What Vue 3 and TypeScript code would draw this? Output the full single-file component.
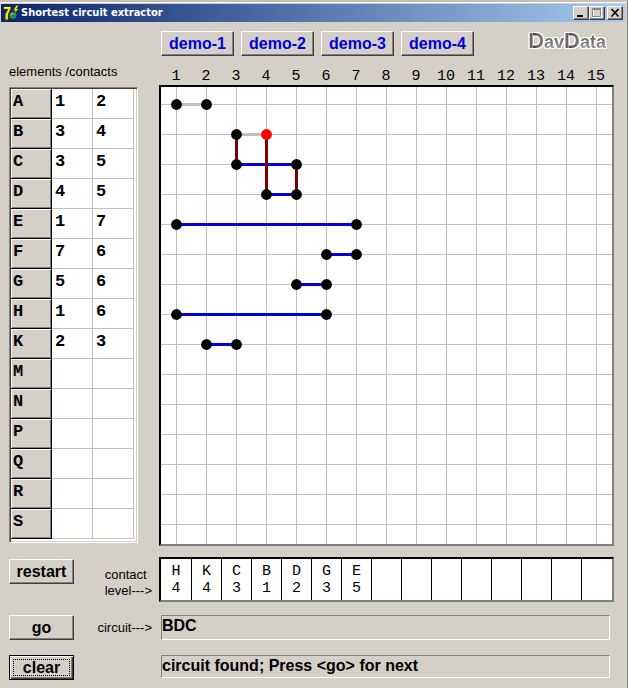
<script setup lang="ts">
interface Element {
  name: string
  from?: number
  to?: number
}

interface Level {
  name: string
  level: number
}

const elements: Element[] = [
  { name: 'A', from: 1, to: 2 },
  { name: 'B', from: 3, to: 4 },
  { name: 'C', from: 3, to: 5 },
  { name: 'D', from: 4, to: 5 },
  { name: 'E', from: 1, to: 7 },
  { name: 'F', from: 7, to: 6 },
  { name: 'G', from: 5, to: 6 },
  { name: 'H', from: 1, to: 6 },
  { name: 'K', from: 2, to: 3 },
  { name: 'M' },
  { name: 'N' },
  { name: 'P' },
  { name: 'Q' },
  { name: 'R' },
  { name: 'S' },
]

const demos: string[] = ['demo-1', 'demo-2', 'demo-3', 'demo-4']

const levels: (Level | null)[] = [
  { name: 'H', level: 4 },
  { name: 'K', level: 4 },
  { name: 'C', level: 3 },
  { name: 'B', level: 1 },
  { name: 'D', level: 2 },
  { name: 'G', level: 3 },
  { name: 'E', level: 5 },
  ...Array<null>(8).fill(null),
]

// Centre of a contact column / element row on the board
const cx = (contact: number): number => (contact - 1) * 30 + 15.5
const cy = (row: number): number => row * 30 + 17.5

const wired = elements
  .map((e, row) => ({ ...e, row }))
  .filter((e): e is { name: string; from: number; to: number; row: number } => e.from !== undefined)

const idle = new Set<string>(['A', 'B'])

// Vertical joins: contact, first row, last row
const joins: [number, number, number][] = [
  [3, 1, 2],
  [4, 1, 3],
  [5, 2, 3],
]

const isActive = (row: number, contact: number): boolean => row === 1 && contact === 4
</script>

<template>
  <div class="window">
    <header class="titlebar">
      <svg class="app-icon" width="17" height="16" viewBox="0 0 17 16" aria-hidden="true">
        <path d="M1.500 1.500H9V4L6.500 9V15H3V9L5.500 4.500H1.500Z" fill="#f4dc28" stroke="#3a3400" stroke-width="1" />
        <path d="M2.500 2.500H8" stroke="#fffbb0" />
        <circle cx="11" cy="10.500" r="4" fill="#2e8b57" stroke="#10402c" />
        <path d="M8.500 10L10.500 8.500L12.500 9.500" stroke="#a5e0c0" fill="none" />
        <path d="M14 0.500L11.500 5.500H13.500L11.500 9.500L16.500 4H14.500L16.500 0.500Z" fill="#f8f020" stroke="#3c4a10" stroke-width="0.500" />
      </svg>
      <h1>Shortest circuit extractor</h1>
      <div class="caption-buttons">
        <button type="button" aria-label="Minimize">
          <svg width="12" height="10" viewBox="0 0 12 10"><path d="M2 7H8V9H2Z" fill="#000" /></svg>
        </button>
        <button type="button" aria-label="Maximize" disabled>
          <svg width="12" height="10" viewBox="0 0 12 10">
            <path d="M2.500 1V9.500H10.500V1" fill="none" stroke="#fff" />
            <path d="M1.500 0.500H9.500V8.500H1.500ZM1.500 1.500H9.500" fill="none" stroke="#868686" />
          </svg>
        </button>
        <button type="button" class="close" aria-label="Close">
          <svg width="12" height="10" viewBox="0 0 12 10"><path d="M2.500 1L9.500 8.500M9.500 1L2.500 8.500" stroke="#000" stroke-width="1.700" /></svg>
        </button>
      </div>
    </header>

    <main>
      <div class="upper">
        <div class="table-title">elements /contacts</div>
        <div class="board-head">
          <div class="toolbar">
            <button v-for="demo in demos" :key="demo" type="button" class="btn demo">{{ demo }}</button>
            <div class="logo"><span class="cap">D</span><span class="low">av</span><span class="cap">D</span><span class="low">ata</span></div>
          </div>
          <div class="numbers">
            <span v-for="n in 15" :key="n">{{ n }}</span>
          </div>
        </div>

        <div class="sunken">
          <table>
            <tbody>
              <tr v-for="e in elements" :key="e.name">
                <th scope="row">{{ e.name }}</th>
                <td>{{ e.from }}</td>
                <td>{{ e.to }}</td>
              </tr>
            </tbody>
          </table>
        </div>

        <div class="panel board">
          <svg width="100%" height="457" role="img" aria-label="Circuit board">
            <g class="grid">
              <line v-for="n in 15" :key="'v' + n" :x1="cx(n)" :x2="cx(n)" y1="0" y2="457" />
              <line v-for="n in 15" :key="'h' + n" x1="0" x2="100%" :y1="cy(n - 1)" :y2="cy(n - 1)" />
            </g>
            <line
              v-for="e in wired"
              :key="e.name"
              :class="['wire', { idle: idle.has(e.name) }]"
              :x1="cx(e.from)"
              :x2="cx(e.to)"
              :y1="cy(e.row)"
              :y2="cy(e.row)"
            />
            <line
              v-for="[c, a, b] in joins"
              :key="'j' + c"
              class="wire join"
              :x1="cx(c)"
              :x2="cx(c)"
              :y1="cy(a)"
              :y2="cy(b)"
            />
            <template v-for="e in wired" :key="'p' + e.name">
              <circle
                v-for="c in [e.from, e.to]"
                :key="c"
                :class="{ active: isActive(e.row, c) }"
                :cx="cx(c)"
                :cy="cy(e.row)"
                r="5.4"
              />
            </template>
          </svg>
        </div>
      </div>

      <div class="lower">
        <button type="button" class="btn side">restart</button>
        <div class="caption two"><span>contact<br />level---&gt;</span></div>
        <ol class="panel levels">
          <li v-for="(l, i) in levels" :key="i">
            <template v-if="l"><span>{{ l.name }}</span><span>{{ l.level }}</span></template>
          </li>
        </ol>

        <button type="button" class="btn side">go</button>
        <label class="caption" for="circuit">circuit---&gt;</label>
        <output id="circuit" class="field">BDC</output>

        <button type="button" class="btn side default"><span>clear</span></button>
        <output class="field status">circuit found; Press &lt;go&gt; for next</output>
      </div>
    </main>
  </div>
</template>

<style>
body {
  background: #d4d0c8;
}
</style>

<style scoped>
.window {
  box-sizing: border-box;
  min-height: 100vh;
  padding: 1px 2px 0 1px;
  border-top: 2px solid #c4c0b8;
  border-right: 1px solid #808080;
  box-shadow: inset 0 1px #fff;
  background: #d4d0c8;
  color: #000;
  font-family: "Liberation Sans", Arial, sans-serif;
  font-size: 13px;
}

.titlebar {
  display: flex;
  align-items: center;
  height: 18px;
  margin-top: 1px;
  padding: 0 2px 0 1px;
  background: linear-gradient(to right, #0a246a, #a6caf0);
}

.titlebar h1 {
  flex: 1;
  margin: 0 0 0 2px;
  color: #fff;
  font: bold 11px/18px "DejaVu Sans Condensed", "DejaVu Sans", Tahoma, sans-serif;
}

.caption-buttons {
  display: flex;
}

.caption-buttons button {
  display: flex;
  box-sizing: border-box;
  width: 16px;
  height: 14px;
  padding: 1px;
  border: 1px solid;
  border-color: #fff #404040 #404040 #fff;
  background: #d4d0c8;
  box-shadow: inset -1px -1px #808080;
}

.caption-buttons .close {
  margin-left: 2px;
}

main {
  padding: 9px 11px 8px 8px;
}

.upper {
  display: grid;
  grid-template-columns: 129px 1fr;
  column-gap: 21px;
}

.table-title {
  align-self: end;
  padding-bottom: 5px;
  line-height: 16px;
}

.toolbar {
  display: flex;
  gap: 7px;
  padding: 0 8px 0 2px;
}

.btn {
  box-sizing: border-box;
  height: 25px;
  padding: 0;
  border: 1px solid;
  border-color: #fff #404040 #404040 #fff;
  background: #d4d0c8;
  box-shadow: inset -1px -1px #808080;
  color: #000;
  font: bold 16px/20px "Liberation Sans", Arial, sans-serif;
}

.demo {
  width: 73px;
  color: #0000e0;
}

.logo {
  display: flex;
  align-items: baseline;
  height: 20px;
  margin-left: auto;
  font-weight: bold;
  line-height: 20px;
  filter: drop-shadow(1px 0 0 #fff) drop-shadow(-1px 0 0 #fff) drop-shadow(0 1px 0 #fff) drop-shadow(0 -1px 0 #fff);
}

.logo span {
  color: transparent;
  background-clip: text;
}

.logo .cap {
  font-size: 22px;
  background-image: linear-gradient(to right, #666 0 4px, #999 4px 5px, #444 5px, #888);
}

.logo .low {
  font-size: 18px;
  background-image: linear-gradient(#555, #777 50%, #aaa);
}

.numbers {
  display: grid;
  grid-template-columns: repeat(15, 30px);
  height: 16px;
  margin-top: 13px;
  padding-left: 2px;
  font: 15px/16px "Liberation Mono", "Courier New", monospace;
  text-align: center;
}

.sunken {
  align-self: start;
  box-sizing: border-box;
  margin-top: 2px;
  padding: 1px 3px 3px 1px;
  border: 1px solid;
  border-color: #808080 #fff #fff #808080;
  background: #fff;
  box-shadow: inset 1px 1px #404040, inset -1px -1px #d4d0c8;
}

table {
  width: 100%;
  border-spacing: 0;
  table-layout: fixed;
  font: bold 17px/24px "Liberation Mono", "Courier New", monospace;
}

th,
td {
  box-sizing: border-box;
  height: 30px;
  padding: 0 0 3px 3px;
  border: solid #c0c0c0;
  border-width: 0 1px 1px 0;
  text-align: left;
}

th {
  padding-left: 2px;
  border-color: #000;
  background: #d4d0c8;
  box-shadow: inset 1px 1px #fff, inset -1px -1px #808080;
}

.panel {
  border: 2px solid;
  border-color: #000 #808080 #808080 #000;
  background: #fff;
}

.board svg {
  display: block;
}

.grid line {
  stroke: #c0c0c0;
}

.wire {
  stroke: #0000e0;
  stroke-width: 3;
}

.wire.idle {
  stroke: #c0c0c0;
}

.wire.join {
  stroke: #800000;
}

.active {
  fill: #f00;
}

.lower {
  display: grid;
  grid-template-columns: 65px 85px 1fr;
  row-gap: 15px;
  margin-top: 11px;
}

.side {
  width: 65px;
}

.side:first-child {
  margin-top: 2px;
}

.default {
  padding: 0 3px;
  border-color: #000;
  box-shadow: inset 1px 1px #fff, inset -1px -1px #404040, inset -2px -2px #808080;
}

.default span {
  display: block;
  border: 1px dotted #000;
  line-height: 15px;
}

.caption {
  align-self: center;
  padding-right: 7px;
  line-height: 16px;
  text-align: right;
}

.caption.two {
  padding-top: 8px;
}

.caption span {
  display: inline-block;
  text-align: left;
}

.levels {
  display: grid;
  grid-template-columns: repeat(14, 30px) 1fr;
  height: 41px;
  padding: 0;
  margin: 0 0 -2px;
  list-style: none;
  font: 15px/17px "Liberation Mono", "Courier New", monospace;
  text-align: center;
}

.levels li {
  display: flex;
  flex-direction: column;
  padding-top: 4px;
}

.levels li + li {
  border-left: 1px solid #000;
}

.field {
  box-sizing: border-box;
  height: 25px;
  margin: 0 4px 0 2px;
  border: 1px solid;
  border-color: #808080 #fff #fff #808080;
  font-size: 16px;
  font-weight: bold;
  line-height: 20px;
}

.status {
  grid-column: 3;
  height: 23px;
}
</style>
